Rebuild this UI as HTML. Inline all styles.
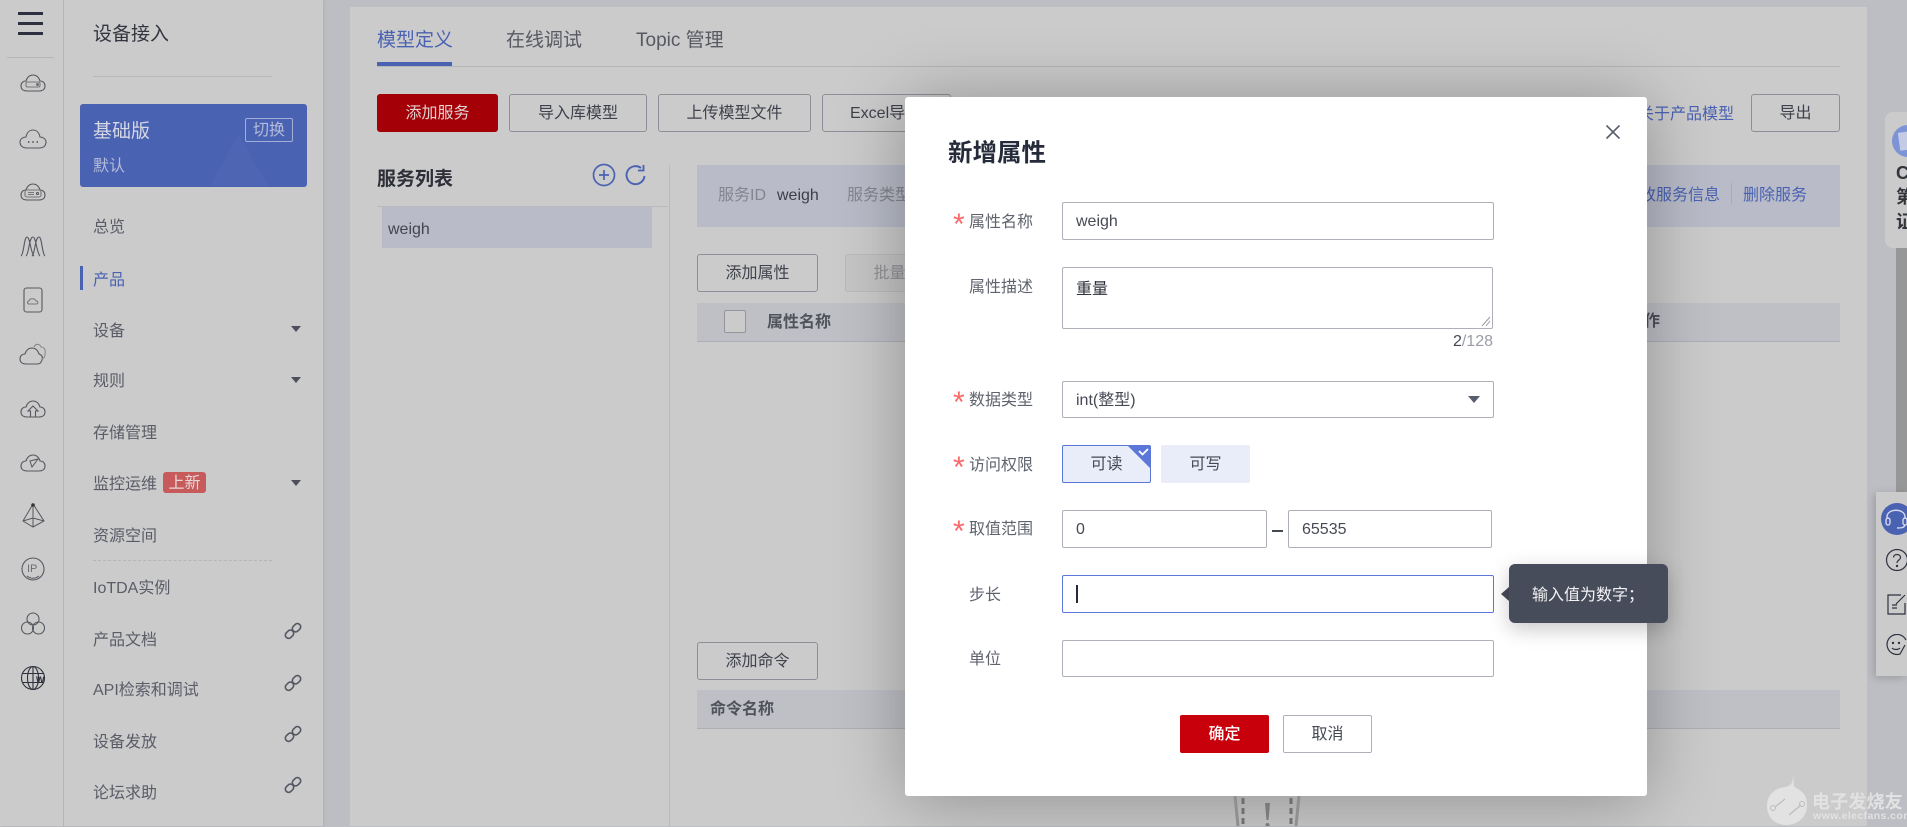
<!DOCTYPE html>
<html lang="zh"><head><meta charset="utf-8"><title>新增属性</title>
<style>
html,body{margin:0;padding:0}
body{width:1907px;height:826px;overflow:hidden;position:relative;background:#bdbec3;font-family:"Liberation Sans","Noto Sans CJK SC",sans-serif;font-size:16px;color:#50535e}
div,span.a,svg{position:absolute}
.t{position:absolute;white-space:nowrap;line-height:22px;height:22px;margin-top:2px}
.nav{left:93px;color:#5a5d68}
.btn{box-sizing:border-box;height:38px;border:1px solid #8e8f96;border-radius:3px;text-align:center;line-height:38px;color:#3f424c;white-space:nowrap;overflow:hidden}
.lab{left:969px;color:#5f636e}
.star{left:953px;color:#fa6a6a;font-size:30px;line-height:22px;width:14px;margin-top:0}
.inp{box-sizing:border-box;background:#fff;border:1px solid #adb0b8;border-radius:2px;line-height:38px;padding-left:13px;color:#464a55;height:38px}
.ic{left:19px;width:28px;height:28px;fill:none;stroke:#55585f;stroke-width:1.1}
.lk{left:284px;width:18px;height:18px;fill:none;stroke:#555863;stroke-width:1.6}
.arr{left:291px;width:0;height:0;border-left:5px solid transparent;border-right:5px solid transparent;border-top:6px solid #4d505b}
</style></head><body>

<!-- rail + sidebar -->
<div style="left:0;top:0;width:323px;height:826px;background:#cbcbcb;box-shadow:1px 0 3px rgba(0,0,0,.08)"></div>
<div style="left:63px;top:0;width:1px;height:826px;background:#b4b5b8"></div>
<div style="left:18px;top:12px;width:25px;height:3px;background:#2d3040"></div>
<div style="left:18px;top:22px;width:25px;height:3px;background:#2d3040"></div>
<div style="left:18px;top:32px;width:25px;height:3px;background:#2d3040"></div>
<div style="left:7px;top:57px;width:47px;height:1px;background:#b4b5b8"></div>

<svg class="ic" style="top:68px" viewBox="0 0 28 28"><path d="M8 23C4 23 2 21 2 18 2 15 4 13 7 13 8 9 11 7 14 7 17 7 20 9 21 13 24 13 26 15 26 18 26 21 24 23 20 23Z"/><rect x="7" y="14" width="14" height="5" rx="1.5" stroke="#777"/><circle cx="18.5" cy="16.5" r=".8"/></svg>
<svg class="ic" style="top:124px" viewBox="0 0 28 28"><path d="M8 24C4 24 1 22 1 18 1 15 4 13 7 13 8 8 11 6 14 6 17 6 20 8 21 13 24 13 27 15 27 18 27 22 24 24 20 24Z"/><path d="M9 18h1.4M13.3 18h1.4M17.600 18h1.4" stroke-width="1.8"/></svg>
<svg class="ic" style="top:177px" viewBox="0 0 28 28"><path d="M8 23C4 23 2 21 2 18 2 15 4 13 7 13 8 9 11 7 14 7 17 7 20 9 21 13 24 13 26 15 26 18 26 21 24 23 20 23Z"/><rect x="6" y="13" width="16" height="7" rx="2" stroke="#777"/><path d="M9 15.500h6M9 17.500h6" stroke="#777"/><circle cx="18.500" cy="16.500" r="1"/></svg>
<svg class="ic" style="top:230px" viewBox="0 0 28 28"><path d="M2 26C5 24 5 7 8 7 11 7 12 24 15 26M7 26C10 24 10 7 14 7 17 7 18 24 21 26M13 26C16 24 16 7 20 7 23 7 23 24 26 26"/></svg>
<svg class="ic" style="top:286px" viewBox="0 0 28 28"><rect x="5" y="2" width="18" height="24" rx="2.500"/><path d="M10 18C8 18 8 15 10 15 10.500 12 16 12 17 15 19.500 15 19.500 18 17 18Z" stroke-width="1" stroke="#777"/></svg>
<svg class="ic" style="top:339px" viewBox="0 0 28 28"><path d="M7 25C3 25 1 23 1 20 1 17 3 15 6 15 7 11 10 9 13 9 16 9 19 11 20 15 23 16 24 18 23 21 22 24 21 25 18 25Z"/><path d="M15 8C17 4 21 5 22 8 25 8 27 11 26 15 26 18 25 19 23 20" stroke="#888"/></svg>
<svg class="ic" style="top:393px" viewBox="0 0 28 28"><path d="M8 24C4 24 2 22 2 19 2 16 4 14 7 14 8 10 11 8 14 8 17 8 20 10 21 14 24 14 26 16 26 19 26 22 24 24 20 24Z"/><path d="M9 18L14 13 19 18H16.500V24H11.500V18Z"/></svg>
<svg class="ic" style="top:447px" viewBox="0 0 28 28"><path d="M8 24C4 24 2 22 2 19 2 16 4 14 7 14 8 10 11 8 14 8 17 8 20 10 21 14 24 14 26 16 26 19 26 22 24 24 20 24Z"/><path d="M11 14L19 12 13 20Z" stroke-width="1"/></svg>
<svg class="ic" style="top:501px" viewBox="0 0 28 28"><path d="M14 3L4 20 14 26 25 20ZM14 3V26M4 20L14 17 25 20" stroke-width="1"/><circle cx="14" cy="4" r="1.800" fill="#333" stroke="none"/></svg>
<svg class="ic" style="top:555px" viewBox="0 0 28 28"><circle cx="14" cy="14" r="11"/><path d="M8 21C12 24 16 24 20 21" stroke-width="1"/></svg>
<span class="t" style="left:27px;top:556px;font-size:11px;color:#6a6d77">IP</span>
<svg class="ic" style="top:610px" viewBox="0 0 28 28"><circle cx="14" cy="9" r="6"/><circle cx="8.500" cy="18" r="6"/><circle cx="19.500" cy="18" r="6"/></svg>
<svg class="ic" style="top:664px;stroke:#2f323d" viewBox="0 0 28 28"><circle cx="14" cy="14" r="11.500"/><ellipse cx="14" cy="14" rx="5.500" ry="11.500"/><path d="M14 2.500V25.500M3.500 9.500H24.500M3.500 18.500H24.500"/></svg>
<span class="t" style="left:36px;top:667px;font-size:9px;font-weight:bold;color:#2f323d">W</span>

<div class="t" style="left:93px;top:22px;font-size:19px;color:#33363f">设备接入</div>
<div style="left:93px;top:76px;width:179px;height:1px;background:#b7b8bb"></div>
<div style="left:80px;top:104px;width:227px;height:83px;background:#4a62b2;border-radius:3px"></div>
<svg style="left:208px;top:132px;width:62px;height:54px"><path d="M31 2L60 54H2Z" fill="#5a70ba" opacity=".25"/></svg>
<div class="t" style="left:93px;top:119px;font-size:19px;color:#d5d8e4">基础版</div>
<div style="left:245px;top:118px;width:46px;height:22px;border:1px solid #a2aed6;border-radius:2px;text-align:center;line-height:24px;color:#b4bcdb;font-size:16px">切换</div>
<div class="t" style="left:93px;top:154px;color:#b4bcdb">默认</div>

<div class="t nav" style="top:215px">总览</div>
<div style="left:80px;top:266px;width:3px;height:24px;background:#4a62b2"></div>
<div class="t nav" style="top:268px;color:#4a62b2">产品</div>
<div class="t nav" style="top:319px">设备</div><div class="arr" style="top:326px"></div>
<div class="t nav" style="top:369px">规则</div><div class="arr" style="top:377px"></div>
<div class="t nav" style="top:421px">存储管理</div>
<div class="t nav" style="top:472px">监控运维</div>
<div style="left:163px;top:472px;width:43px;height:21px;background:#c75a5a;border-radius:3px;color:#e6d6d6;text-align:center;line-height:23px;overflow:hidden">上新</div>
<div class="arr" style="top:480px"></div>
<div class="t nav" style="top:524px">资源空间</div>
<div style="left:93px;top:560px;width:179px;border-top:1px dashed #b4b5b8"></div>
<div class="t nav" style="top:576px">IoTDA实例</div>
<div class="t nav" style="top:628px">产品文档</div>
<div class="t nav" style="top:678px">API检索和调试</div>
<div class="t nav" style="top:730px">设备发放</div>
<div class="t nav" style="top:781px">论坛求助</div>
<svg class="lk" style="top:622px" viewBox="0 0 18 18"><rect x="8" y="2.500" width="9" height="6.500" rx="3.200" transform="rotate(-45 12.500 5.750)"/><rect x="1" y="9" width="9" height="6.500" rx="3.200" transform="rotate(-45 5.500 12.250)"/></svg>
<svg class="lk" style="top:674px" viewBox="0 0 18 18"><rect x="8" y="2.500" width="9" height="6.500" rx="3.200" transform="rotate(-45 12.500 5.750)"/><rect x="1" y="9" width="9" height="6.500" rx="3.200" transform="rotate(-45 5.500 12.250)"/></svg>
<svg class="lk" style="top:725px" viewBox="0 0 18 18"><rect x="8" y="2.500" width="9" height="6.500" rx="3.200" transform="rotate(-45 12.500 5.750)"/><rect x="1" y="9" width="9" height="6.500" rx="3.200" transform="rotate(-45 5.500 12.250)"/></svg>
<svg class="lk" style="top:776px" viewBox="0 0 18 18"><rect x="8" y="2.500" width="9" height="6.500" rx="3.200" transform="rotate(-45 12.500 5.750)"/><rect x="1" y="9" width="9" height="6.500" rx="3.200" transform="rotate(-45 5.500 12.250)"/></svg>

<!-- content card -->
<div style="left:350px;top:7px;width:1517px;height:819px;background:#cbcbcb"></div>
<div class="t" style="left:377px;top:28px;font-size:19px;color:#4a62b2">模型定义</div>
<div class="t" style="left:506px;top:28px;font-size:19px;color:#565962">在线调试</div>
<div class="t" style="left:636px;top:28px;font-size:19px;color:#565962">Topic 管理</div>
<div style="left:377px;top:66px;width:1463px;height:1px;background:#b4b5b9"></div>
<div style="left:377px;top:62px;width:75px;height:4px;background:#4a62b2"></div>

<div class="btn" style="left:377px;top:94px;width:121px;background:#a30007;border-color:#a30007;color:#e3d0d0">添加服务</div>
<div class="btn" style="left:509px;top:94px;width:138px">导入库模型</div>
<div class="btn" style="left:658px;top:94px;width:153px">上传模型文件</div>
<div class="btn" style="left:822px;top:94px;width:129px;text-align:left;padding-left:27px">Excel导入</div>
<div class="t" style="left:1638px;top:102px;color:#4a62b2">关于产品模型</div>
<div class="btn" style="left:1751px;top:94px;width:89px">导出</div>

<div class="t" style="left:377px;top:167px;font-size:19px;font-weight:bold;color:#2e3039">服务列表</div>
<svg style="left:592px;top:163px;width:24px;height:24px;fill:none;stroke:#4a62b2;stroke-width:1.700" viewBox="0 0 24 24"><circle cx="12" cy="12" r="10.500"/><path d="M12 7v10M7 12h10"/></svg>
<svg style="left:624px;top:163px;width:24px;height:24px;fill:none;stroke:#4a62b2;stroke-width:1.900" viewBox="0 0 24 24"><path d="M20.500 13A9 9 0 1 1 17 5"/><path d="M19.500 2V7.500H14" stroke-width="1.800"/></svg>
<div style="left:377px;top:206px;width:291px;height:1px;background:#b9babd"></div>
<div style="left:669px;top:165px;width:1px;height:661px;background:#b9babd"></div>
<div style="left:382px;top:207px;width:270px;height:41px;background:#b9bcc8"></div>
<div class="t" style="left:388px;top:217px;color:#43464f">weigh</div>

<div style="left:697px;top:165px;width:1143px;height:62px;background:#b9bcc8"></div>
<div class="t" style="left:718px;top:183px;color:#83858f">服务ID</div>
<div class="t" style="left:777px;top:183px;color:#3c3f48">weigh</div>
<div class="t" style="left:847px;top:183px;color:#83858f">服务类型</div>
<div class="t" style="left:1624px;top:183px;color:#4a62b2">修改服务信息</div>
<div style="left:1731px;top:183px;width:1px;height:21px;background:#a9acb8"></div>
<div class="t" style="left:1743px;top:183px;color:#4a62b2">删除服务</div>

<div class="btn" style="left:697px;top:254px;width:121px">添加属性</div>
<div class="btn" style="left:845px;top:254px;width:121px;background:#c5c5c5;border-color:#bbb;color:#909196">批量添加</div>
<div style="left:697px;top:303px;width:1143px;height:38px;background:#bfc0c6;border-bottom:1px solid #aeafb5"></div>
<div style="left:724px;top:310px;width:20px;height:21px;border:1px solid #94959c;border-radius:2px;background:#cbcbcb"></div>
<div class="t" style="left:767px;top:310px;font-weight:bold;color:#50535c">属性名称</div>
<div class="t" style="left:1628px;top:309px;font-weight:bold;color:#50535c">操作</div>

<div class="btn" style="left:697px;top:642px;width:121px">添加命令</div>
<div style="left:697px;top:690px;width:1143px;height:38px;background:#bfc0c6;border-bottom:1px solid #aeafb5"></div>
<div class="t" style="left:710px;top:697px;font-weight:bold;color:#50535c">命令名称</div>

<!-- float panels -->
<div style="left:1896px;top:248px;width:11px;height:244px;background:#979797"></div>
<div style="left:1885px;top:112px;width:30px;height:136px;background:#cbcbcb;border-radius:8px 0 0 8px"></div>
<div style="left:1892px;top:125px;width:32px;height:32px;border-radius:50%;background:#7c93d6"></div>
<div style="left:1899px;top:132px;width:12px;height:18px;background:#c3cce4;transform:rotate(-8deg)"></div>
<div class="t" style="left:1896px;top:160px;font-size:18px;font-weight:bold;color:#33353d">C</div>
<div class="t" style="left:1896px;top:184px;font-size:18px;font-weight:bold;color:#33353d">第</div>
<div class="t" style="left:1896px;top:209px;font-size:18px;font-weight:bold;color:#33353d">证</div>

<div style="left:1876px;top:492px;width:31px;height:184px;background:#cbcbcb;box-shadow:-2px 2px 8px rgba(0,0,0,.18)"></div>
<div style="left:1881px;top:503px;width:32px;height:32px;border-radius:50%;background:#4a62b2"></div>
<svg style="left:1884px;top:506px;width:23px;height:26px;fill:none;stroke:#d3d8ea;stroke-width:1.400" viewBox="0 0 23 26"><path d="M3 13V11C3 2 21 2 21 11V13"/><rect x="2" y="12" width="4" height="7" rx="2"/><rect x="19" y="12" width="4" height="7" rx="2"/><path d="M21 19C20 22 17 22 13 22"/></svg>
<svg style="left:1885px;top:548px;width:22px;height:24px;fill:none;stroke:#2f3240;stroke-width:1.200" viewBox="0 0 22 24"><circle cx="12" cy="12" r="10.500"/><path d="M8.500 9.500C8.500 5.500 15.500 5.500 15.500 9.500 15.500 12 12 12 12 15"/><circle cx="12" cy="18" r=".6"/></svg>
<svg style="left:1887px;top:593px;width:20px;height:22px;fill:none;stroke:#2f3240;stroke-width:1.200" viewBox="0 0 20 22"><path d="M14 2H1V21H18V10M18 2L9 11M5 12H10M5 15H10"/></svg>
<svg style="left:1885px;top:634px;width:22px;height:22px;fill:none;stroke:#2f3240;stroke-width:1.200" viewBox="0 0 22 22"><path d="M21 6A10 10 0 1 0 15 20L20 11"/><circle cx="8" cy="9" r=".6"/><circle cx="14" cy="9" r=".6"/><path d="M7 14C9 16 13 16 15 14"/></svg>

<!-- watermark -->
<svg style="left:1765px;top:775px;width:45px;height:51px" viewBox="0 0 45 51"><path d="M28 1C30 8 26 11 33 14 40 18 42 23 42 30 42 42 33 50 21 50 10 50 2 42 2 31 2 21 9 13 20 12 26 11 28 8 28 1Z" fill="#e2e2e2"/><path d="M10 32L20 24M24 40L36 30" stroke="#bdbdbd" stroke-width="1.300"/><circle cx="8" cy="33" r="2.500" fill="none" stroke="#bdbdbd"/><circle cx="37" cy="29" r="2.500" fill="none" stroke="#bdbdbd"/></svg>
<div class="t" style="left:1812px;top:789px;font-size:18px;font-weight:bold;color:#e2e2e2;letter-spacing:.2px">电子发烧友</div>
<div class="t" style="left:1813px;top:803px;font-size:10.500px;font-weight:bold;color:#e2e2e2;letter-spacing:.4px">www.elecfans.com</div>

<!-- dialog -->
<div style="left:905px;top:97px;width:742px;height:699px;background:#fff;border-radius:3px;box-shadow:0 4px 70px rgba(0,0,0,.3)"></div>
<svg style="left:1232px;top:796px;width:70px;height:30px;fill:none" viewBox="0 0 70 30"><path d="M3 0L6 30M67 0L64 30" stroke="#8f8f8f" stroke-width="3"/><path d="M11 2V30M59 2V30" stroke="#6f6f6f" stroke-width="3" stroke-dasharray="6 4"/><path d="M33 7H38L36.500 24H34.500Z" fill="#7a7a7a"/><circle cx="35.500" cy="29" r="2" fill="#7a7a7a"/></svg>

<div class="t" style="left:948px;top:137px;height:30px;line-height:30px;font-size:24.500px;font-weight:bold;color:#252b3a">新增属性</div>
<svg style="left:1605px;top:124px;width:16px;height:16px;stroke:#575d6c;stroke-width:1.600;fill:none" viewBox="0 0 16 16"><path d="M1.500 1.500L14.500 14.500M14.500 1.500L1.500 14.500"/></svg>

<div class="t star" style="top:214px">*</div><div class="t lab" style="top:210px">属性名称</div>
<div class="inp" style="left:1062px;top:202px;width:432px">weigh</div>

<div class="t lab" style="top:275px">属性描述</div>
<div class="inp" style="left:1062px;top:267px;width:431px;height:62px;line-height:20px;padding-top:12px;color:#2f323c">重量</div>
<svg style="left:1481px;top:315px;width:10px;height:12px;stroke:#9a9ca3;fill:none" viewBox="0 0 10 12"><path d="M1 11L9 2M5 11L9 6"/></svg>
<div class="t" style="left:1451px;top:329px;width:42px;text-align:right;color:#9a9da6"><span style="color:#454954">2</span>/128</div>

<div class="t star" style="top:392px">*</div><div class="t lab" style="top:388px">数据类型</div>
<div class="inp" style="left:1062px;top:381px;width:432px;height:37px;line-height:37px">int(整型)</div>
<div style="left:1468px;top:396px;width:0;height:0;border-left:6px solid transparent;border-right:6px solid transparent;border-top:7px solid #575d6c"></div>

<div class="t star" style="top:457px">*</div><div class="t lab" style="top:453px">访问权限</div>
<div style="box-sizing:border-box;left:1062px;top:445px;width:89px;height:38px;background:#e9edf9;border:1px solid #5b78d8;border-radius:2px;text-align:center;line-height:38px;color:#454954;overflow:hidden">可读</div>
<svg style="left:1128px;top:446px;width:22px;height:22px" viewBox="0 0 22 22"><path d="M0 0H22V22Z" fill="#5b78d8"/><path d="M11 5L14.500 8.500 20 3" fill="none" stroke="#fff" stroke-width="1.800"/></svg>
<div style="left:1161px;top:445px;width:89px;height:38px;background:#e9edf9;border-radius:2px;text-align:center;line-height:40px;color:#454954">可写</div>

<div class="t star" style="top:521px">*</div><div class="t lab" style="top:517px">取值范围</div>
<div class="inp" style="left:1062px;top:510px;width:205px">0</div>
<div style="left:1272px;top:530px;width:11px;height:1.500px;background:#454954"></div>
<div class="inp" style="left:1288px;top:510px;width:204px">65535</div>

<div class="t lab" style="top:583px">步长</div>
<div class="inp" style="left:1062px;top:575px;width:432px;border-color:#5b78d8"></div>
<div style="left:1076px;top:585px;width:2px;height:18px;background:#252b3a"></div>

<div class="t lab" style="top:647px">单位</div>
<div class="inp" style="left:1062px;top:640px;width:432px;height:37px"></div>

<div style="left:1501px;top:587px;width:0;height:0;border-top:7px solid transparent;border-bottom:7px solid transparent;border-right:8px solid #474c5a"></div>
<div style="left:1509px;top:564px;width:159px;height:59px;background:#474c5a;border-radius:6px;box-shadow:0 6px 20px rgba(0,0,0,.22)"></div>
<div class="t" style="left:1532px;top:583px;color:#f2f2f4">输入值为数字；</div>

<div style="left:1180px;top:715px;width:89px;height:38px;background:#c7000b;border-radius:2px;text-align:center;line-height:39px;color:#fff;font-weight:500">确定</div>
<div class="btn" style="left:1283px;top:715px;width:89px;border-color:#adb0b8;border-radius:2px;color:#454954;background:#fff">取消</div>

</body></html>
